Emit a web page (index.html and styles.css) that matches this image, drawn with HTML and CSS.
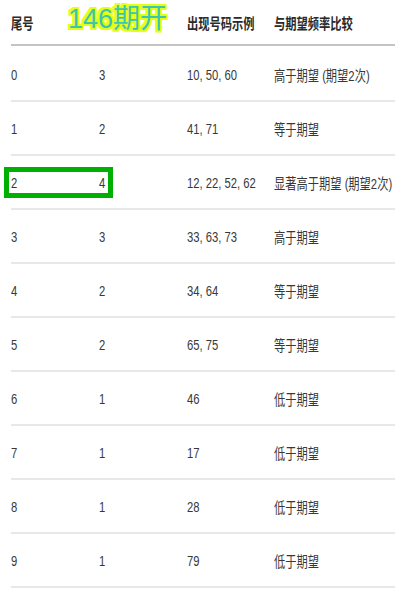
FILE: index.html
```
<!DOCTYPE html>
<html lang="zh">
<head>
<meta charset="utf-8">
<link rel="stylesheet" href="styles.css">
</head>
<body>
<div class="page">
  <div class="table">
    <div class="row head">
      <div><span class="t">尾号</span></div>
      <div></div>
      <div><span class="t">出现号码示例</span></div>
      <div><span class="t">与期望频率比较</span></div>
    </div>
    <div class="body">
      <div class="row"><div><span class="t">0</span></div><div><span class="t">3</span></div><div><span class="t">10, 50, 60</span></div><div><span class="t">高于期望 (期望2次)</span></div></div>
      <div class="row"><div><span class="t">1</span></div><div><span class="t">2</span></div><div><span class="t">41, 71</span></div><div><span class="t">等于期望</span></div></div>
      <div class="row"><div><span class="t">2</span></div><div><span class="t">4</span></div><div><span class="t">12, 22, 52, 62</span></div><div><span class="t">显著高于期望 (期望2次)</span></div></div>
      <div class="row"><div><span class="t">3</span></div><div><span class="t">3</span></div><div><span class="t">33, 63, 73</span></div><div><span class="t">高于期望</span></div></div>
      <div class="row"><div><span class="t">4</span></div><div><span class="t">2</span></div><div><span class="t">34, 64</span></div><div><span class="t">等于期望</span></div></div>
      <div class="row"><div><span class="t">5</span></div><div><span class="t">2</span></div><div><span class="t">65, 75</span></div><div><span class="t">等于期望</span></div></div>
      <div class="row"><div><span class="t">6</span></div><div><span class="t">1</span></div><div><span class="t">46</span></div><div><span class="t">低于期望</span></div></div>
      <div class="row"><div><span class="t">7</span></div><div><span class="t">1</span></div><div><span class="t">17</span></div><div><span class="t">低于期望</span></div></div>
      <div class="row"><div><span class="t">8</span></div><div><span class="t">1</span></div><div><span class="t">28</span></div><div><span class="t">低于期望</span></div></div>
      <div class="row"><div><span class="t">9</span></div><div><span class="t">1</span></div><div><span class="t">79</span></div><div><span class="t">低于期望</span></div></div>
    </div>
  </div>
  <div class="title">146期开</div>
  <div class="highlight"></div>
</div>
</body>
</html>
```
FILE: styles.css
```
html, body {
  margin: 0;
  padding: 0;
  background: #ffffff;
}
body {
  width: 395px;
  height: 595px;
  overflow: hidden;
  font-family: "Liberation Sans", "Noto Sans CJK SC", sans-serif;
  color: #383838;
}
.page {
  position: relative;
  width: 395px;
  height: 595px;
  overflow: hidden;
}
.table {
  margin-left: 11px;
}
.row {
  display: grid;
  grid-template-columns: 88px 88px 87px minmax(0, 1fr);
  align-items: center;
  height: 52px;
  border-bottom: 2px solid #e8e8e8;
  font-size: 15px;
}
.row > div {
  white-space: nowrap;
  overflow: hidden;
  min-width: 0;
}
.head {
  height: 44px;
  border-bottom: 2px solid #c4c4c4;
  font-weight: 700;
  color: #2a2a2a;
}
.body {
  padding-top: 2px;
}
.t {
  display: inline-block;
  transform: scaleX(0.75);
  transform-origin: left center;
}
.title {
  position: absolute;
  left: 68px;
  top: 4px;
  font-size: 27px;
  line-height: 31px;
  color: #3cc4b4;
  white-space: nowrap;
  text-shadow:
    2px 0 0 #e4ff10, -2px 0 0 #e4ff10, 0 2px 0 #e4ff10, 0 -2px 0 #e4ff10,
    2px 2px 0 #e4ff10, -2px 2px 0 #e4ff10, 2px -2px 0 #e4ff10, -2px -2px 0 #e4ff10,
    0 0 3px #e4ff10;
}
.highlight {
  position: absolute;
  left: 4px;
  top: 167px;
  width: 109px;
  height: 31px;
  box-sizing: border-box;
  border: 5px solid #00b000;
}
```
